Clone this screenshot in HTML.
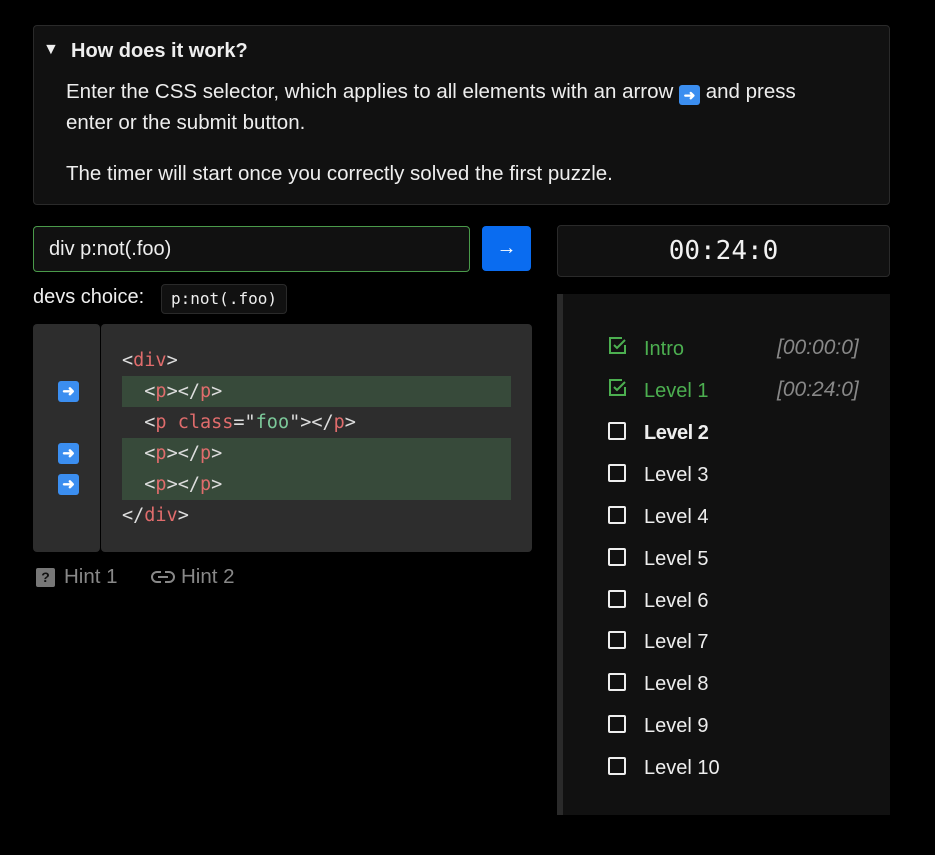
<!DOCTYPE html>
<html><head><style>
*{box-sizing:border-box;margin:0;padding:0}
body{background:#000;width:935px;height:855px;position:relative;font-family:"Liberation Sans",sans-serif;color:#eee;overflow:hidden}
.abs{position:absolute}
.det{left:33px;top:25px;width:857px;height:180px;background:#111;border:1px solid #2a2a2a;border-radius:4px}
.mono{font-family:"DejaVu Sans Mono","Liberation Mono",monospace}
.t{color:#e06c6c}.g{color:#7cc99a}.b{color:#ddd}
.code div{height:31px;line-height:31px;font-size:18.5px;padding-left:0}
.hl{background:#374a3a}
.arr{width:21px;height:21px;background:#3b8ef0;border-radius:3px;color:#fff;font-size:15px;line-height:21px;text-align:center;font-weight:bold}
.lv{position:absolute;left:608px;font-size:20px;height:30px;line-height:30px}
.lv .cb{position:absolute;left:0;top:4px;width:18px;height:18px;border:2px solid #eee;border-radius:2px}
.lv span.n{position:absolute;left:36px;white-space:nowrap}
.tm{position:absolute;left:777px;font-style:italic;color:#888;font-size:21px}
</style></head><body>
<div class="abs det"></div>
<div class="abs" style="left:43px;top:41px;font-size:16px">▼</div>
<div class="abs" style="left:71px;top:40px;font-size:20px;font-weight:bold">How does it work?</div>
<div class="abs" style="left:66px;top:76px;font-size:20.5px;line-height:31px;width:760px">Enter the CSS selector, which applies to all elements with an arrow <span style="display:inline-block;width:21px;height:20px;background:#3b8ef0;border-radius:3px;color:#fff;font-size:14px;line-height:20px;text-align:center;vertical-align:-2px;font-weight:bold">➜</span> and press enter or the submit button.</div>
<div class="abs" style="left:66px;top:158px;font-size:20.5px;line-height:31px">The timer will start once you correctly solved the first puzzle.</div>

<div class="abs" style="left:33px;top:226px;width:437px;height:46px;background:#111;border:1px solid #4a9a4a;border-radius:4px;font-size:20px;line-height:44px;padding-left:15px">div p:not(.foo)</div>
<div class="abs" style="left:482px;top:226px;width:49px;height:45px;background:#0a6cf0;border-radius:4px;color:#fff;text-align:center;line-height:44px;font-size:20px">→</div>
<div class="abs" style="left:33px;top:286px;font-size:20px">devs choice:</div>
<div class="abs mono" style="left:161px;top:284px;width:126px;height:30px;background:#111;border:1px solid #2a2a2a;border-radius:4px;font-size:16px;line-height:28px;text-align:center">p:not(.foo)</div>

<div class="abs" style="left:33px;top:324px;width:67px;height:228px;background:#2d2d2d;border-radius:4px"></div>
<div class="abs" style="left:101px;top:324px;width:431px;height:228px;background:#2d2d2d;border-radius:4px"></div>
<div class="abs arr" style="left:58px;top:381px">➜</div>
<div class="abs arr" style="left:58px;top:443px">➜</div>
<div class="abs arr" style="left:58px;top:474px">➜</div>
<div class="abs code mono" style="left:122px;top:345px;width:389px">
<div><span class="b">&lt;</span><span class="t">div</span><span class="b">&gt;</span></div>
<div class="hl">&nbsp;&nbsp;<span class="b">&lt;</span><span class="t">p</span><span class="b">&gt;&lt;/</span><span class="t">p</span><span class="b">&gt;</span></div>
<div>&nbsp;&nbsp;<span class="b">&lt;</span><span class="t">p class</span><span class="b">="</span><span class="g">foo</span><span class="b">"&gt;&lt;/</span><span class="t">p</span><span class="b">&gt;</span></div>
<div class="hl">&nbsp;&nbsp;<span class="b">&lt;</span><span class="t">p</span><span class="b">&gt;&lt;/</span><span class="t">p</span><span class="b">&gt;</span></div>
<div class="hl">&nbsp;&nbsp;<span class="b">&lt;</span><span class="t">p</span><span class="b">&gt;&lt;/</span><span class="t">p</span><span class="b">&gt;</span></div>
<div><span class="b">&lt;/</span><span class="t">div</span><span class="b">&gt;</span></div>
</div>
<div class="abs" style="left:36px;top:568px;width:19px;height:19px;background:#777;border-radius:2px;color:#111;font-size:14px;font-weight:bold;text-align:center;line-height:19px">?</div>
<div class="abs" style="left:64px;top:565px;font-size:20.5px;color:#888">Hint 1</div>
<svg class="abs" style="left:151px;top:569px" width="24" height="16" viewBox="0 0 24 16"><path d="M10 3H6a5 5 0 0 0 0 10h4M14 3h4a5 5 0 0 1 0 10h-4M7 8h10" fill="none" stroke="#888" stroke-width="2"/></svg>
<div class="abs" style="left:181px;top:565px;font-size:20.5px;color:#888">Hint 2</div>

<div class="abs mono" style="left:557px;top:225px;width:333px;height:52px;background:#111;border:1px solid #2a2a2a;border-radius:4px;text-align:center;line-height:50px;font-size:26px;color:#f2f2f2">00:24:0</div>
<div class="abs" style="left:557px;top:294px;width:333px;height:521px;background:#111;border-left:6px solid #2a2a2a"></div>

<div class="lv" style="top:334px;color:#4caf50"><svg class="abs" style="left:0;top:2px" width="20" height="20" viewBox="0 0 20 20"><path d="M17 9v8H2V2h12M6 9l3 3 8-8" fill="none" stroke="#4caf50" stroke-width="2"/></svg><span class="n">Intro</span></div>
<div class="tm" style="top:336px">[00:00:0]</div>
<div class="lv" style="top:376px;color:#4caf50"><svg class="abs" style="left:0;top:2px" width="20" height="20" viewBox="0 0 20 20"><path d="M17 9v8H2V2h12M6 9l3 3 8-8" fill="none" stroke="#4caf50" stroke-width="2"/></svg><span class="n">Level 1</span></div>
<div class="tm" style="top:378px">[00:24:0]</div>
<div class="lv" style="top:418px"><div class="cb"></div><span class="n" style="font-weight:bold;letter-spacing:-0.5px">Level 2</span></div>
<div class="lv" style="top:460px"><div class="cb"></div><span class="n">Level 3</span></div>
<div class="lv" style="top:502px"><div class="cb"></div><span class="n">Level 4</span></div>
<div class="lv" style="top:544px"><div class="cb"></div><span class="n">Level 5</span></div>
<div class="lv" style="top:586px"><div class="cb"></div><span class="n">Level 6</span></div>
<div class="lv" style="top:627px"><div class="cb"></div><span class="n">Level 7</span></div>
<div class="lv" style="top:669px"><div class="cb"></div><span class="n">Level 8</span></div>
<div class="lv" style="top:711px"><div class="cb"></div><span class="n">Level 9</span></div>
<div class="lv" style="top:753px"><div class="cb"></div><span class="n">Level 10</span></div>
</body></html>
